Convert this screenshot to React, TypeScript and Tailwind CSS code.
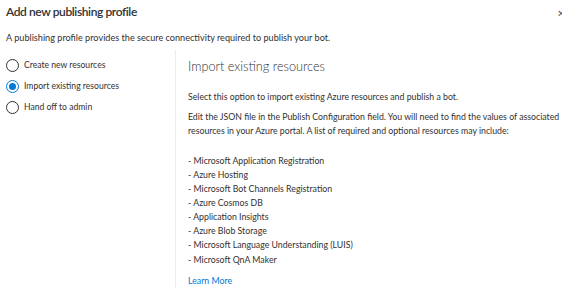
const resources = [
  'Microsoft Application Registration',
  'Azure Hosting',
  'Microsoft Bot Channels Registration',
  'Azure Cosmos DB',
  'Application Insights',
  'Azure Blob Storage',
  'Microsoft Language Understanding (LUIS)',
  'Microsoft QnA Maker',
];

const options = [
  { key: 'create', label: 'Create new resources' },
  { key: 'import', label: 'Import existing resources' },
  { key: 'admin', label: 'Hand off to admin' },
];

function Radio({ checked }: { checked: boolean }) {
  return (
    <span
      className={`flex h-[13px] w-[13px] shrink-0 items-center justify-center rounded-full border ${
        checked ? 'border-[#0078d4]' : 'border-[#323130]'
      }`}
    >
      {checked && <span className="h-[7px] w-[7px] rounded-full bg-[#0078d4]" />}
    </span>
  );
}

export default function App() {
  const selected = 'import';

  return (
    <div
      className="relative h-[288px] w-[562px] overflow-hidden bg-white text-[#323130]"
      style={{ fontFamily: 'Lato, "Open Sans", sans-serif' }}
    >
      <div className="absolute right-[-3px] top-[6px] text-[10px] text-[#605e5c]">✕</div>

      <h1 className="pl-[6px] text-[12px] font-semibold leading-[24px] tracking-[-0.4px] text-[#323130]">
        Add new publishing profile
      </h1>

      <p className="mt-[7px] pl-[6px] text-[9.15px] leading-[14px]">
        A publishing profile provides the secure connectivity required to publish your bot.
      </p>

      <div className="mt-[5px] flex">
        <div className="flex w-[175px] flex-col gap-[8px] pl-[6px] pt-[9px]">
          {options.map((o) => (
            <label key={o.key} className="flex items-center gap-[5px] text-[8.6px] leading-[13px]">
              <Radio checked={o.key === selected} />
              {o.label}
            </label>
          ))}
        </div>

        <div className="flex-1 border-l border-[#edebe9] pl-[12px]">
          <h2 className="pt-[7px] text-[12.7px] font-light leading-[18px] text-[#323130]">
            Import existing resources
          </h2>

          <div className="text-[8.75px] leading-[14.5px]">
            <p className="mt-[15px]">
              Select this option to import existing Azure resources and publish a bot.
            </p>
            <p className="mt-[5px]">
              Edit the JSON file in the Publish Configuration field. You will need to find the values of associated
              resources in your Azure portal. A list of required and optional resources may include:
            </p>

            <ul className="mt-[15px] leading-[14.15px]">
              {resources.map((r) => (
                <li key={r}>- {r}</li>
              ))}
            </ul>

            <a href="#" className="mt-[7px] block text-[#0078d4]">
              Learn More
            </a>
          </div>
        </div>
      </div>
    </div>
  );
}
